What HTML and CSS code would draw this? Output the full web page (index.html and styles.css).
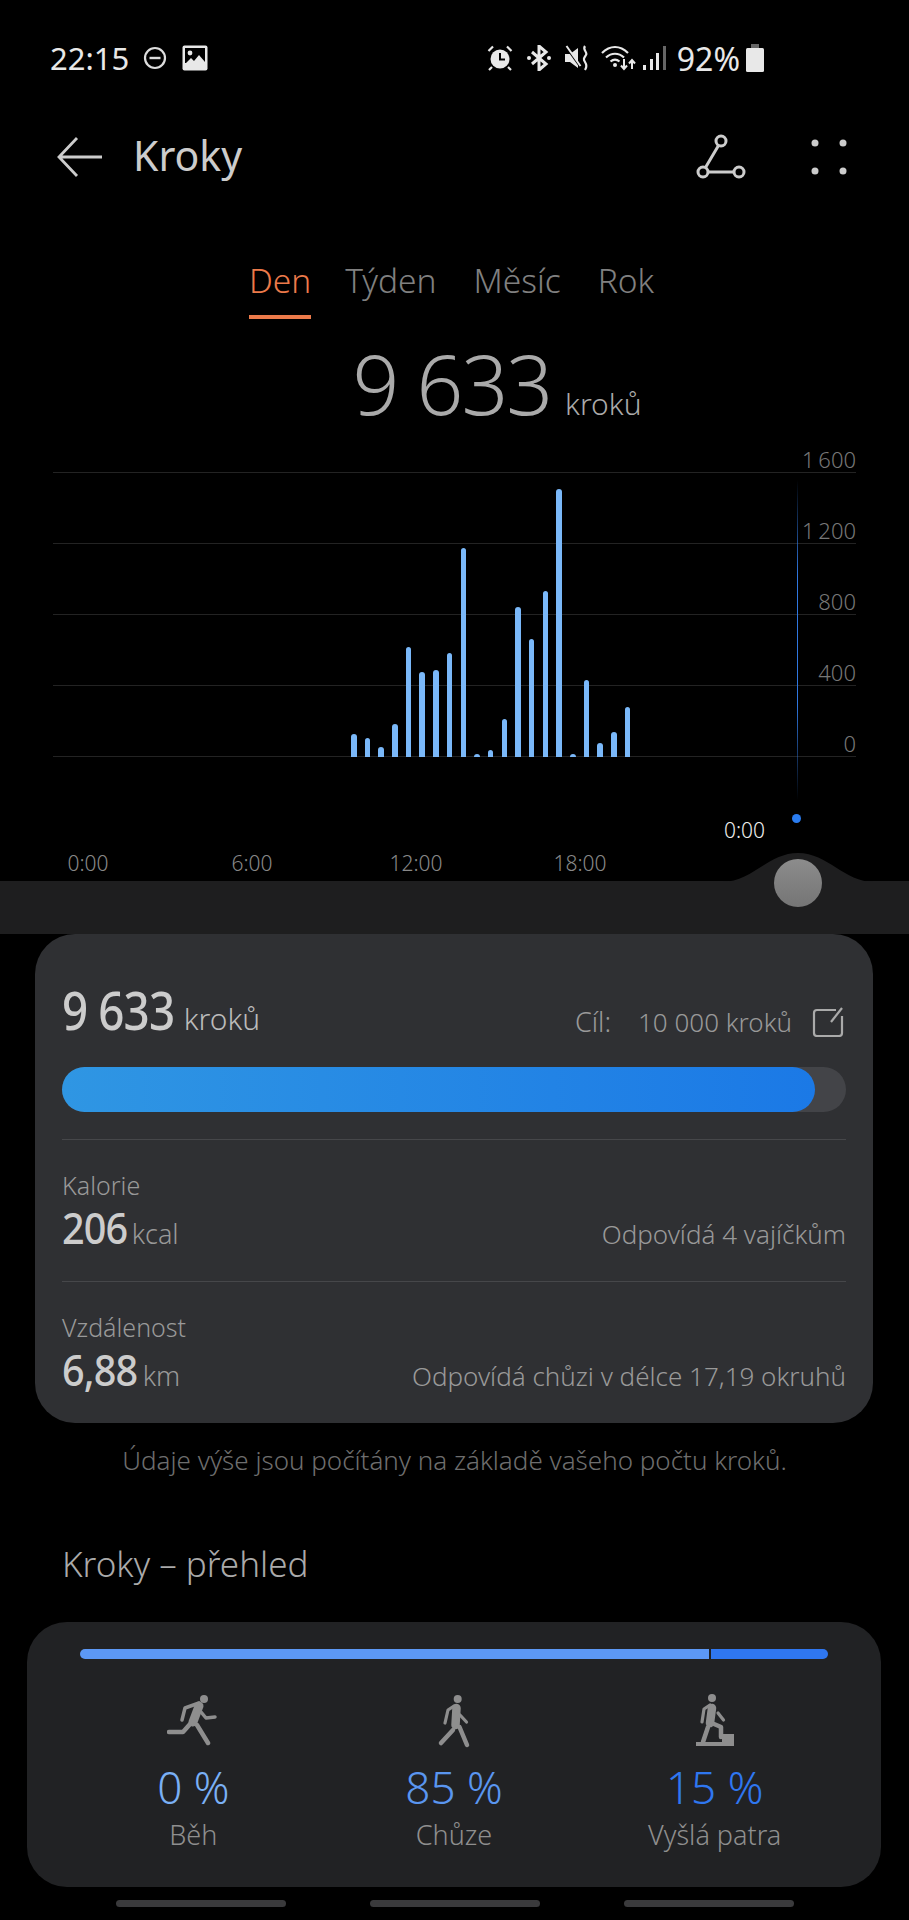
FILE: index.html
```html
<!DOCTYPE html>
<html lang="cs">
<head>
  <meta charset="UTF-8" />
  <meta name="viewport" content="width=device-width, initial-scale=1" />
  <title>Kroky</title>
  <link rel="stylesheet" href="styles.css">
</head>
<body>
  <div class="status-bar">
    <span class="clock">22:15</span>
    <svg class="st-dnd" width="24" height="24" viewBox="0 0 24 24"><circle cx="12" cy="12" r="10" fill="none" stroke="#ddd" stroke-width="2.2"/><rect x="6.5" y="10.8" width="11" height="2.4" fill="#ddd"/></svg>
    <svg class="st-pic" width="26" height="26" viewBox="0 0 26 26"><rect x="0.5" y="0.5" width="25" height="25" rx="2" fill="#e8e8e8"/><rect x="3" y="3" width="20" height="15" fill="#000"/><circle cx="8" cy="8" r="2.4" fill="#e8e8e8"/><path d="M3 19l6-6 3 3 5-6 6 7v4H3z" fill="#e8e8e8"/></svg>
    <div class="status-right">
      <svg class="st-alarm" width="26" height="26" viewBox="0 0 26 26"><circle cx="13" cy="14" r="9.5" fill="#e8e8e8"/><path d="M13 8v6.5h5" fill="none" stroke="#000" stroke-width="2"/><path d="M1.5 6L6 1.5M24.5 6L20 1.5M5 22l-3 3M21 22l3 3" stroke="#e8e8e8" stroke-width="2.2"/></svg>
      <svg class="st-bt" width="24" height="26" viewBox="0 0 24 26"><path d="M5 7l14 12-7 6V1l7 6L5 19" fill="none" stroke="#e8e8e8" stroke-width="3"/><circle cx="2" cy="13" r="2" fill="#e8e8e8"/><circle cx="22" cy="13" r="2" fill="#e8e8e8"/></svg>
      <svg class="st-mute" width="26" height="26" viewBox="0 0 26 26"><path d="M1 9h5l8-6v20l-8-6H1z" fill="#e8e8e8"/><path d="M2 2l15 21" stroke="#000" stroke-width="2"/><path d="M2.500 1l14 20" stroke="#e8e8e8" stroke-width="2"/><path d="M21 1c-3 4 3 6 1 9s-3 4-1 7 2 5 0 8" fill="none" stroke="#e8e8e8" stroke-width="2.2"/></svg>
      <svg class="st-wifi" width="36" height="26" viewBox="0 0 36 26"><path d="M1 8c8-8 18-8 26 0M5 12.500c5.500-5 12.500-5 18 0M9.500 16.500c3-2.500 6-2.500 9 0" fill="none" stroke="#e8e8e8" stroke-width="2.200"/><circle cx="14" cy="20" r="2" fill="#e8e8e8"/><path d="M23 14v10M20 20.500l3 3.500 3-3.500M31 24V15M28 18.500l3-3.500 3 3.500" fill="none" stroke="#e8e8e8" stroke-width="2"/></svg>
      <svg class="st-signal" width="23" height="26" viewBox="0 0 23 26"><rect x="0" y="20" width="3" height="5" fill="#e8e8e8"/><rect x="7" y="14" width="3" height="11" fill="#e8e8e8"/><rect x="13" y="8" width="3" height="17" fill="#e8e8e8"/><rect x="20" y="1" width="3" height="24" fill="#666"/></svg>
      <span class="battery-text">92%</span>
      <svg class="st-battery" width="18" height="28" viewBox="0 0 18 28"><rect x="5" y="0" width="8" height="5" fill="#666"/><rect x="0" y="4" width="18" height="24" rx="1.500" fill="#e8e8e8"/></svg>
    </div>
  </div>

  <div class="app-bar">
    <svg class="back-icon" width="46" height="42" viewBox="0 0 46 42"><path d="M45 21H3M20 2L2 21l18 19" fill="none" stroke="#ccc" stroke-width="2.800"/></svg>
    <span class="app-title">Kroky</span>
    <svg class="share-icon" width="50" height="46" viewBox="0 0 50 46"><g fill="none" stroke="#ccc" stroke-width="3"><circle cx="25" cy="7" r="5"/><circle cx="7" cy="38" r="5"/><circle cx="43" cy="38" r="5"/><path d="M22.500 11.500L9.500 33.500M12 38h26"/></g></svg>
    <svg class="more-icon" width="36" height="36" viewBox="0 0 36 36"><g fill="#ccc"><circle cx="4" cy="4" r="3.500"/><circle cx="32" cy="4" r="3.500"/><circle cx="4" cy="32" r="3.500"/><circle cx="32" cy="32" r="3.500"/></g></svg>
  </div>

  <div class="tabs">
    <span class="tab active">Den</span>
    <span class="tab">Týden</span>
    <span class="tab">Měsíc</span>
    <span class="tab">Rok</span>
  </div>

  <div class="hero">
    <span class="hero-num">9 633</span>
    <span class="hero-unit">kroků</span>
  </div>

  <div class="chart">
    <div class="grid-row"><span>1 600</span></div>
    <div class="grid-row"><span>1 200</span></div>
    <div class="grid-row"><span>800</span></div>
    <div class="grid-row"><span>400</span></div>
    <div class="grid-row"><span>0</span></div>
    <div class="bars">
      <div class="bar" style="height:23px"></div>
      <div class="bar" style="height:19px"></div>
      <div class="bar" style="height:10px"></div>
      <div class="bar" style="height:33px"></div>
      <div class="bar" style="height:110px"></div>
      <div class="bar" style="height:85px"></div>
      <div class="bar" style="height:87px"></div>
      <div class="bar" style="height:104px"></div>
      <div class="bar" style="height:209px"></div>
      <div class="bar" style="height:3px"></div>
      <div class="bar" style="height:7px"></div>
      <div class="bar" style="height:38px"></div>
      <div class="bar" style="height:150px"></div>
      <div class="bar" style="height:118px"></div>
      <div class="bar" style="height:166px"></div>
      <div class="bar" style="height:268px"></div>
      <div class="bar" style="height:3px"></div>
      <div class="bar" style="height:77px"></div>
      <div class="bar" style="height:14px"></div>
      <div class="bar" style="height:25px"></div>
      <div class="bar" style="height:50px"></div>
    </div>
    <div class="cursor-line"></div>
  </div>

  <div class="axis">
    <span class="now-label">0:00</span>
    <span class="now-dot"></span>
    <div class="axis-labels">
      <span>0:00</span>
      <span>6:00</span>
      <span>12:00</span>
      <span>18:00</span>
    </div>
  </div>

  <div class="slider-band">
    <svg class="hump" width="152" height="30" viewBox="0 0 152 30"><path d="M0 30c30 0 46-29 76-29s46 29 76 29z" fill="#1e1e1f"/></svg>
    <span class="knob"></span>
  </div>

  <div class="card summary">
    <div class="summary-top">
      <div>
        <span class="big-num">9 633</span>
        <span class="big-unit">kroků</span>
      </div>
      <div class="goal">
        <span class="goal-label">Cíl:</span>
        <span>10 000 kroků</span>
        <svg width="32" height="30" viewBox="0 0 32 30"><path d="M24 3H5a3 3 0 0 0-3 3v20a3 3 0 0 0 3 3h22a3 3 0 0 0 3-3V9" fill="none" stroke="#aaa" stroke-width="2.200"/><path d="M30 1L19 15" stroke="#aaa" stroke-width="2.200"/></svg>
      </div>
    </div>
    <div class="progress"><div class="progress-fill" style="width:96%"></div></div>
    <div class="metric">
      <div class="metric-label">Kalorie</div>
      <div class="metric-row">
        <div><span class="metric-num">206</span> <span class="metric-unit">kcal</span></div>
        <span class="metric-note">Odpovídá 4 vajíčkům</span>
      </div>
    </div>
    <div class="metric">
      <div class="metric-label">Vzdálenost</div>
      <div class="metric-row">
        <div><span class="metric-num">6,88</span> <span class="metric-unit">km</span></div>
        <span class="metric-note">Odpovídá chůzi v délce 17,19 okruhů</span>
      </div>
    </div>
  </div>

  <p class="note">Údaje výše jsou počítány na základě vašeho počtu kroků.</p>

  <h2 class="section-title">Kroky – přehled</h2>

  <div class="card overview">
    <div class="seg-bar">
      <div class="seg seg-walk" style="flex:84.3"></div>
      <div class="seg seg-climb" style="flex:15.7"></div>
    </div>
    <div class="activities">
      <div class="activity">
        <svg width="52" height="56" viewBox="0 0 52 56"><circle cx="37" cy="7" r="4"/><g fill="none" stroke="#8e8e8e" stroke-linejoin="round" stroke-linecap="round"><path d="M32 14L26 30" stroke-width="9"/><path d="M15 28l3-12 14-5M34 20l5 6 9-1" stroke-width="3.500"/><path d="M24 31l-8 9H2M30 33l11 18" stroke-width="4.500"/></g></svg>
        <div class="pct pct-run">0 %</div>
        <div class="activity-name">Běh</div>
      </div>
      <div class="activity">
        <svg width="36" height="56" viewBox="0 0 36 56"><circle cx="21.700" cy="7" r="4"/><g fill="none" stroke="#8e8e8e" stroke-linejoin="round" stroke-linecap="round"><path d="M20.500 16L19.500 33" stroke-width="8.500"/><path d="M9 31l3-13 6-4M24 23l6.500 7" stroke-width="3.200"/><path d="M17 38L5 51M23.500 35L31 53" stroke-width="4.500"/></g></svg>
        <div class="pct pct-walk">85 %</div>
        <div class="activity-name">Chůze</div>
      </div>
      <div class="activity">
        <svg width="42" height="56" viewBox="0 0 42 56"><circle cx="18" cy="6" r="4"/><path d="M2 54v-4h26v-8h12v12z"/><g fill="none" stroke="#8e8e8e" stroke-linejoin="round" stroke-linecap="round"><path d="M18 16L16 31" stroke-width="8.500"/><path d="M8 30l2-13 6-4M24 21l5.500 7" stroke-width="3.200"/><path d="M14 35L9 50" stroke-width="4.500"/><path d="M20 32l7 3v10" stroke-width="4.500"/></g></svg>
        <div class="pct pct-climb">15 %</div>
        <div class="activity-name">Vyšlá patra</div>
      </div>
    </div>
  </div>

  <div class="bottom-pills">
    <span></span>
    <span></span>
    <span></span>
  </div>
</body>
</html>
```

FILE: styles.css
```css
* {
  box-sizing: border-box;
}
body {
  margin: 0;
  background: #000;
  color: #aaa;
  font-family: "Noto Sans", sans-serif;
  font-weight: 300;
  width: 909px;
  height: 1920px;
  overflow: hidden;
}
/* Stavový řádek */
.status-bar {
  display: flex;
  align-items: center;
  height: 36px;
  margin-top: 40px;
  padding: 0 145px 0 50px;
  color: #e8e8e8;
}
.clock {
  font-size: 31px;
  font-weight: 400;
  margin-right: 14px;
}
.st-dnd {
  margin-right: 15px;
}
.status-right {
  display: flex;
  align-items: center;
  margin-left: auto;
}
.st-bt {
  margin-left: 14px;
}
.st-mute {
  margin-left: 13px;
}
.st-wifi {
  margin-left: 11px;
}
.st-signal {
  margin-left: 6px;
}
.battery-text {
  margin-left: 11px;
  font-size: 32px;
  font-weight: 400;
}
.st-battery {
  margin-left: 6px;
}
/* Horní lišta */
.app-bar {
  display: flex;
  align-items: center;
  height: 80px;
  margin-top: 41px;
  padding: 0 62px 0 57px;
}
.back-icon {
  margin-right: 30px;
}
.app-title {
  padding-bottom: 4px;
  font-size: 41px;
  color: #ccc;
  font-weight: 400;
}
.share-icon {
  margin-left: auto;
  margin-right: 65px;
}
/* Záložky */
.tabs {
  display: flex;
  justify-content: center;
  gap: 37px;
  margin-top: 62px;
  padding-right: 6px;
}
.tab {
  height: 60px;
  line-height: 42px;
  font-size: 33.500px;
  color: #808080;
  border-bottom: 4px solid transparent;
}
.tab.active {
  margin-right: -3px;
  color: #ec7a4a;
  border-bottom-color: #ec7a4a;
}
/* Celkový počet */
.hero {
  display: flex;
  justify-content: center;
  align-items: baseline;
  gap: 14px;
  height: 90px;
  margin-top: 19px;
  padding-left: 85px;
}
.hero-num {
  font-size: 82px;
  line-height: 90px;
  letter-spacing: -2px;
}
.hero-unit {
  font-size: 30px;
}
/* Graf */
.chart {
  position: relative;
  margin: 0 53px;
}
.grid-row {
  display: flex;
  justify-content: flex-end;
  align-items: flex-end;
  height: 71px;
  border-bottom: 1px solid #232323;
  font-size: 22px;
  line-height: 26px;
  word-spacing: -2px;
  color: #777;
}
.grid-row:first-child {
  height: 45px;
}
.bars {
  position: absolute;
  left: 298px;
  bottom: 0;
  display: flex;
  align-items: flex-end;
}
.bar {
  width: 5.500px;
  margin-right: 8.200px;
  background: #7ab8f9;
  border-radius: 3px 3px 0 0;
}
.cursor-line {
  position: absolute;
  left: 744px;
  top: 52px;
  width: 1px;
  height: 320px;
  background: linear-gradient(180deg, rgba(47, 119, 240, 0), #2f77e0 30%, #2f77e0 70%, rgba(47, 119, 240, 0));
}
/* Časová osa */
.axis {
  position: relative;
  height: 124px;
}
.axis-labels {
  display: grid;
  grid-template-columns: repeat(4, 164px);
  padding-left: 6px;
  position: absolute;
  left: 0;
  top: 91px;
  font-size: 21px;
  line-height: 30px;
  color: #888;
  text-align: center;
}
.now-label {
  position: absolute;
  left: 724px;
  top: 58px;
  font-size: 21px;
  line-height: 30px;
  color: #eee;
}
.now-dot {
  position: absolute;
  left: 792px;
  top: 57px;
  width: 9px;
  height: 9px;
  border-radius: 50%;
  background: #2a7cf0;
}
.slider-band {
  position: relative;
  height: 53px;
  background: #1e1e1f;
}
.hump {
  position: absolute;
  left: 722px;
  top: -29px;
}
.knob {
  position: absolute;
  left: 774px;
  top: -22px;
  width: 48px;
  height: 48px;
  border-radius: 50%;
  background: linear-gradient(180deg, #8c8c8c, #757575);
}
/* Karty */
.card {
  border-radius: 40px;
}
.summary {
  height: 489px;
  margin: 0 36px 0 35px;
  padding: 46px 27px 0;
  background: #2f3033;
}
.summary-top {
  display: flex;
  justify-content: space-between;
  align-items: flex-start;
  height: 60px;
}
.big-num {
  display: inline-block;
  margin-right: -14px;
  font-size: 52px;
  line-height: 60px;
  font-weight: 500;
  color: #ccc;
  letter-spacing: -1px;
  transform: scaleX(0.88);
  transform-origin: left;
}
.big-unit {
  font-size: 30px;
  color: #bbb;
  margin-left: 4px;
}
.goal {
  display: flex;
  align-items: center;
  margin-top: 23px;
  font-size: 26px;
  color: #999;
}
.goal-label {
  margin-right: 27px;
  font-size: 27px;
}
.goal svg {
  margin-left: 20px;
  margin-right: 2px;
}
.progress {
  height: 45px;
  margin-top: 27px;
  background: #434448;
  border-radius: 23px;
}
.progress-fill {
  height: 100%;
  background: linear-gradient(90deg, #2f96e3, #1b79e6);
  border-radius: 23px;
}
.metric {
  height: 142px;
  padding-top: 28px;
  border-top: 1px solid #46474a;
}
.progress + .metric {
  margin-top: 27px;
}
.metric-label {
  font-size: 25px;
  line-height: 35px;
  color: #999;
}
.metric-row {
  display: flex;
  justify-content: space-between;
  align-items: baseline;
  line-height: 48px;
}
.metric-num {
  display: inline-block;
  margin-right: -7px;
  font-size: 44px;
  font-weight: 500;
  color: #ccc;
  letter-spacing: -1px;
  transform: scaleX(0.9);
  transform-origin: left;
}
.metric-unit {
  font-size: 27px;
  color: #999;
}
.metric-note {
  font-size: 26px;
  color: #999;
}
.note {
  margin: 20px 0 0;
  font-size: 26px;
  line-height: 34px;
  color: #6e6e6e;
  text-align: center;
}
.section-title {
  margin: 65px 0 0 62px;
  font-size: 35px;
  line-height: 44px;
  font-weight: 300;
  color: #aaa;
}
.overview {
  height: 265px;
  margin: 36px 28px 0 27px;
  padding: 27px 36px 0;
  background: #212224;
}
.seg-bar {
  display: flex;
  gap: 2px;
  height: 10px;
  margin: 0 17px;
}
.seg {
  height: 100%;
}
.seg-walk {
  background: #5c98f5;
  border-radius: 5px 0 0 5px;
}
.seg-climb {
  background: #2f77f0;
  border-radius: 0 5px 5px 0;
}
.activities {
  display: grid;
  grid-template-columns: repeat(3, 1fr);
  margin-top: 33px;
}
.activity {
  display: flex;
  flex-direction: column;
  align-items: center;
}
.activity svg {
  display: block;
  height: 56px;
  fill: #8e8e8e;
}
.pct {
  margin-top: 13px;
  font-size: 44px;
  line-height: 52px;
}
.pct-run {
  color: #7ab0f5;
}
.pct-walk {
  color: #5a96f0;
}
.pct-climb {
  color: #2f77f0;
}
.activity-name {
  margin-top: 4px;
  font-size: 27px;
  line-height: 36px;
  color: #8f8f8f;
}
.bottom-pills {
  display: flex;
  justify-content: center;
  gap: 84px;
  margin-top: 13px;
}
.bottom-pills span {
  width: 170px;
  height: 7px;
  border-radius: 4px;
  background: #3a3a3c;
}
```
